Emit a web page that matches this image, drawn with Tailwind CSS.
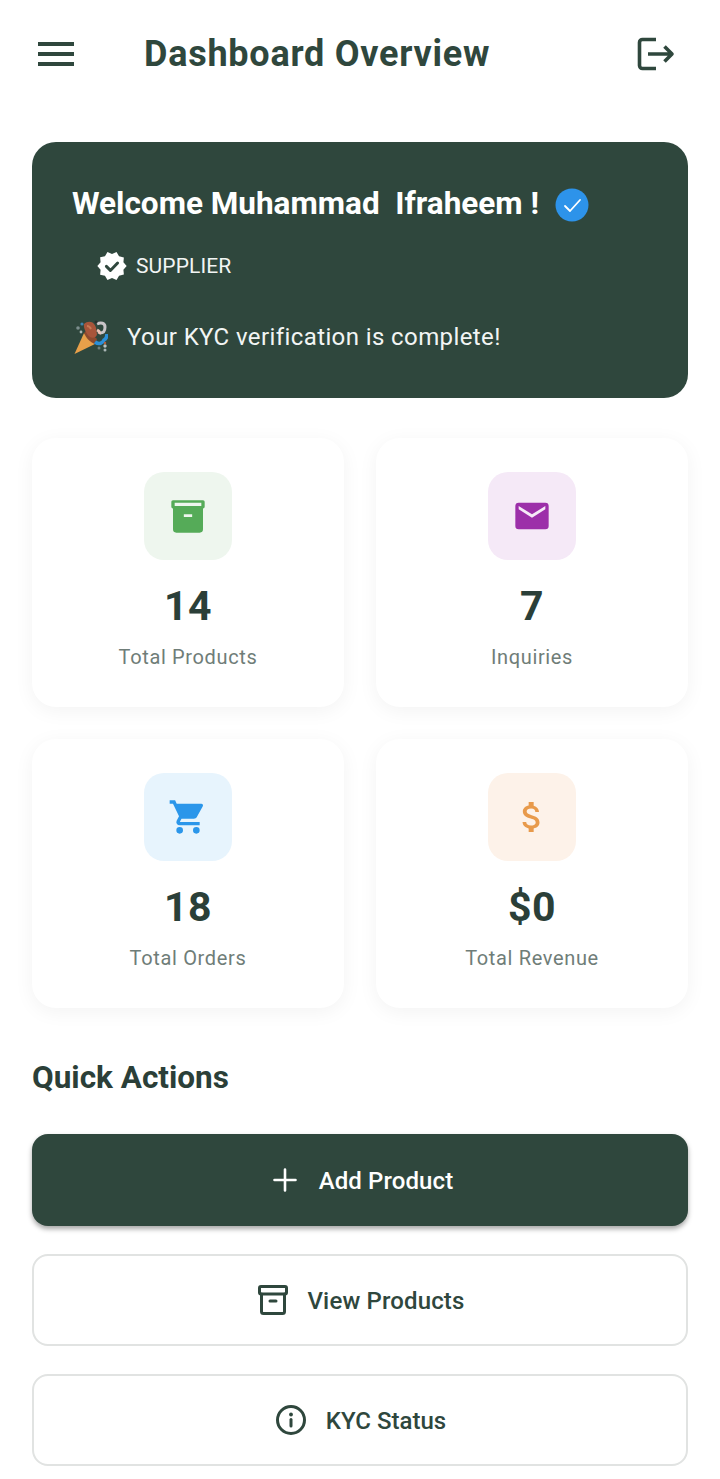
<!DOCTYPE html>
<html>
<head>
<meta charset="utf-8">
<script src="https://cdn.jsdelivr.net/npm/@tailwindcss/browser@4"></script>
</head>
<body class="bg-white font-['Roboto',sans-serif] text-[#2b3f38] overflow-hidden">
<div class="w-[720px] h-[1479px] px-8">
  <header class="relative h-[142px] pb-[36px] flex items-center justify-between">
    <svg class="w-[36px] h-[24px] ml-[6px] mt-[2px]" viewBox="0 0 36 24" fill="#2f473d"><rect y="0" width="36" height="4"/><rect y="10" width="36" height="4"/><rect y="20" width="36" height="4"/></svg>
    <h1 class="absolute left-[112px] top-[30px] text-[36px] leading-[48px] font-bold text-[#2f473d] tracking-[0.75px] whitespace-nowrap">Dashboard Overview</h1>
    <svg class="w-[38px] h-[36px] mr-[13px] mt-[2px]" viewBox="0 0 38 36" fill="none" stroke="#2f473d" stroke-width="3.600" stroke-linejoin="round"><path d="M19 3.500H5.500a3 3 0 0 0-3 3v23a3 3 0 0 0 3 3H19"/><path d="M11 18h24M27.500 10.500L35 18l-7.500 7.500"/></svg>
  </header>

  <section class="h-[256px] rounded-[24px] bg-[#2f473d] text-white pl-[40px] pt-[42px]">
    <div class="flex items-center h-[40px]">
      <span class="text-[31.5px] leading-[40px] font-bold whitespace-pre">Welcome Muhammad  Ifraheem !</span>
      <svg class="w-[34px] h-[34px] ml-[16px] mt-[1px]" viewBox="0 0 34 34"><circle cx="17" cy="17" r="16.500" fill="#2d93ea"/><path d="M10 18l5 5 10-11" fill="none" stroke="#fff" stroke-width="1.800" stroke-linecap="round" stroke-linejoin="round"/></svg>
    </div>
    <div class="flex items-center mt-[27px] ml-[24px] h-[30px]">
      <svg class="w-[32px] h-[32px] shrink-0" viewBox="0 0 24 24"><path fill="#fff" d="M23 12l-2.440-2.780.34-3.680-3.610-.82-1.890-3.180L12 3 8.600 1.540 6.710 4.720l-3.610.81.340 3.680L1 12l2.440 2.780-.34 3.690 3.610.82 1.890 3.180L12 21l3.400 1.460 1.890-3.180 3.610-.82-.34-3.680L23 12z"/><path d="M7.800 12.300l3 3 5.400-5.600" fill="none" stroke="#2f473d" stroke-width="2.200" stroke-linecap="round" stroke-linejoin="round"/></svg>
      <span class="ml-[8px] text-[21px] leading-[30px] tracking-[0.1px] text-[#f2f5f4]">SUPPLIER</span>
    </div>
    <div class="flex items-center mt-[36px] h-[40px]">
      <svg class="w-[36px] h-[36px] shrink-0" viewBox="0 0 36 36">
        <path d="M12 14L2.500 35 23 25z" fill="#e8a04a"/>
        <path d="M12 14c2 5 6 9 11 11l2-5-10-9z" fill="#8c4a2e"/>
        <path d="M12 5c3-3 8-3 10 0 3 3 2 7 3 10 0 3-4 5-7 3s-7-9-6-13z" fill="#a8553a"/>
        <path d="M15 7c2 0 3 1 4 3" fill="none" stroke="#c97a55" stroke-width="2"/>
        <path d="M25 5c4-2 8-1 8 3s-1 6-5 6" fill="none" stroke="#c9c4c8" stroke-width="3"/>
        <path d="M25 11c2 1 3 2 2 4" fill="none" stroke="#eec3b5" stroke-width="3"/>
        <path d="M23 23c4 3 8 1 9-2 2-1 3-3 3-6" fill="none" stroke="#2b8fd8" stroke-width="3.600"/>
        <circle cx="6" cy="9" r="1.800" fill="#7d8f8e"/><circle cx="10" cy="5" r="1.600" fill="#3f86b0"/><circle cx="9" cy="13" r="1.400" fill="#a9b5b5"/><circle cx="33" cy="27" r="1.700" fill="#b9c2c2"/><circle cx="33" cy="31" r="1.500" fill="#a9b5b5"/><circle cx="27" cy="29" r="1.500" fill="#6d7f7d"/><circle cx="33" cy="24" r="1.200" fill="#b5603a"/><circle cx="24" cy="3" r="1.500" fill="#2a2f2d"/>
      </svg>
      <span class="ml-[19px] text-[24px] leading-[40px] tracking-[0.4px] text-[#f2f5f4]">Your KYC verification is complete!</span>
    </div>
  </section>

  <div class="grid grid-cols-2 gap-x-[32px] gap-y-[32px] mt-[40px]">
    <div class="h-[269px] rounded-[24px] bg-white shadow-[0_4px_20px_rgba(0,0,0,0.05)] flex flex-col items-center pt-[34px]">
      <div class="w-[88px] h-[88px] rounded-[20px] bg-[#eef6ee] flex items-center justify-center">
        <svg class="w-[40px] h-[40px]" viewBox="0 0 24 24" fill="#55ab58"><path d="M3 2.500h18a1 1 0 0 1 1 1v3a1 1 0 0 1-1 1V20a2 2 0 0 1-2 2H5a2 2 0 0 1-2-2V7.500a1 1 0 0 1-1-1v-3a1 1 0 0 1 1-1zM4 4v2h16V4zM9.500 11v1.600h5V11z" fill-rule="evenodd"/></svg>
      </div>
      <div class="mt-[22px] text-[41px] leading-[48px] font-bold tracking-[0.5px]">14</div>
      <div class="mt-[13px] text-[20px] leading-[28px] tracking-[0.65px] text-[#6f7d78]">Total Products</div>
    </div>
    <div class="h-[269px] rounded-[24px] bg-white shadow-[0_4px_20px_rgba(0,0,0,0.05)] flex flex-col items-center pt-[34px]">
      <div class="w-[88px] h-[88px] rounded-[20px] bg-[#f5e9f7] flex items-center justify-center">
        <svg class="w-[40px] h-[40px]" viewBox="0 0 24 24" fill="#9c2fa9"><path d="M20 4H4a2 2 0 0 0-2 2v12a2 2 0 0 0 2 2h16a2 2 0 0 0 2-2V6a2 2 0 0 0-2-2zm0 4l-8 5-8-5V6l8 5 8-5z" /></svg>
      </div>
      <div class="mt-[22px] text-[41px] leading-[48px] font-bold tracking-[0.5px]">7</div>
      <div class="mt-[13px] text-[20px] leading-[28px] tracking-[0.65px] text-[#6f7d78]">Inquiries</div>
    </div>
    <div class="h-[269px] rounded-[24px] bg-white shadow-[0_4px_20px_rgba(0,0,0,0.05)] flex flex-col items-center pt-[34px]">
      <div class="w-[88px] h-[88px] rounded-[20px] bg-[#e7f4fd] flex items-center justify-center">
        <svg class="w-[40px] h-[40px]" viewBox="0 0 24 24" fill="#2b96ea"><path d="M7 18a2 2 0 1 0 0 4 2 2 0 0 0 0-4zM1 2v2h2l3.600 7.590-1.350 2.450A2 2 0 0 0 7 17h12v-2H7.420a.25.25 0 0 1-.25-.25l.03-.12L8.100 13h7.450c.75 0 1.410-.41 1.750-1.030l3.580-6.490A1 1 0 0 0 20 4H5.210l-.94-2H1zm16 16a2 2 0 1 0 0 4 2 2 0 0 0 0-4z"/></svg>
      </div>
      <div class="mt-[22px] text-[41px] leading-[48px] font-bold tracking-[0.5px]">18</div>
      <div class="mt-[13px] text-[20px] leading-[28px] tracking-[0.65px] text-[#6f7d78]">Total Orders</div>
    </div>
    <div class="h-[269px] rounded-[24px] bg-white shadow-[0_4px_20px_rgba(0,0,0,0.05)] flex flex-col items-center pt-[34px]">
      <div class="w-[88px] h-[88px] rounded-[20px] bg-[#fdf2e9] flex items-center justify-center">
        <svg class="w-[40px] h-[40px]" viewBox="0 0 24 24" fill="#e89a4b"><path d="M11.800 10.900c-2.270-.59-3-1.200-3-2.150 0-1.090 1.010-1.850 2.700-1.850 1.780 0 2.440.85 2.500 2.100h2.210c-.07-1.720-1.120-3.300-3.210-3.810V3h-3v2.160c-1.940.42-3.500 1.680-3.500 3.610 0 2.310 1.910 3.460 4.700 4.130 2.500.6 3 1.480 3 2.410 0 .69-.49 1.790-2.700 1.790-2.060 0-2.870-.92-2.980-2.100h-2.200c.12 2.190 1.760 3.420 3.680 3.830V21h3v-2.150c1.950-.37 3.500-1.500 3.500-3.550 0-2.840-2.430-3.810-4.700-4.400z"/></svg>
      </div>
      <div class="mt-[22px] text-[41px] leading-[48px] font-bold tracking-[0.5px]">$0</div>
      <div class="mt-[13px] text-[20px] leading-[28px] tracking-[0.65px] text-[#6f7d78]">Total Revenue</div>
    </div>
  </div>

  <h2 class="mt-[49px] text-[31.5px] leading-[42px] font-bold">Quick Actions</h2>

  <div class="mt-[35px] flex flex-col">
    <button class="h-[92px] rounded-[16px] bg-[#2f473d] text-white shadow-[0_3px_5px_rgba(0,0,0,0.35)] flex items-center justify-center pl-[6px]">
      <svg class="w-[24px] h-[24px]" viewBox="0 0 24 24" fill="none" stroke="#fff" stroke-width="2.600" stroke-linecap="round"><path d="M12 1.500v21M1.500 12h21"/></svg>
      <span class="ml-[22px] pt-[2px] text-[24px] leading-[32px] font-medium tracking-[0.1px]">Add Product</span>
    </button>
    <button class="mt-[28px] h-[92px] rounded-[16px] border-2 border-[#e1e3e2] bg-white flex items-center justify-center pl-[3px]">
      <svg class="w-[30px] h-[30px]" viewBox="0 0 30 30" fill="none" stroke="#2f473d" stroke-width="3" stroke-linecap="round" stroke-linejoin="round"><rect x="1.500" y="1.500" width="27" height="7.500" rx="1.500"/><path d="M3.500 9v17.500a2 2 0 0 0 2 2h19a2 2 0 0 0 2-2V9M12 16h6"/></svg>
      <span class="ml-[19px] pt-[2px] text-[24px] leading-[32px] font-medium tracking-[0.15px] text-[#2f473d]">View Products</span>
    </button>
    <button class="mt-[28px] h-[92px] rounded-[16px] border-2 border-[#e1e3e2] bg-white flex items-center justify-center pl-[2px]">
      <svg class="w-[30px] h-[30px]" viewBox="0 0 30 30" fill="none" stroke="#2f473d" stroke-width="3" stroke-linecap="round"><circle cx="15" cy="15" r="13.500"/><path d="M15 14.500v6.500"/><circle cx="15" cy="9.500" r="1.900" fill="#2f473d" stroke="none"/></svg>
      <span class="ml-[20px] pt-[2px] text-[24px] leading-[32px] font-medium text-[#2f473d]">KYC Status</span>
    </button>
  </div>
</div>
</body>
</html>
